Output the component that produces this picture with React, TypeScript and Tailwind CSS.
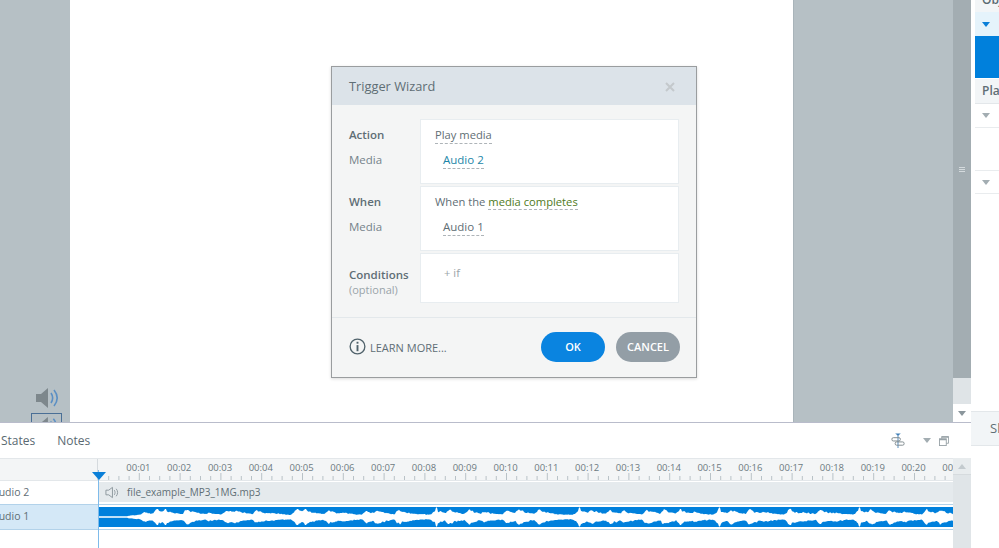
import React from "react";

const FONT = { fontFamily: '"Open Sans", "Noto Sans", sans-serif' };

const PEAKS: [number, number][] = [
  [146, 3], [158, 8], [166, 8], [188, 7], [210, 2.5], [228, 5.5], [236, 5.5], [258, 5], [272, 2.5], [298, 8], [306, 8],
  [330, 5.5], [345, 3], [368, 4.5], [378, 5.5], [400, 6], [437, 9.5], [450, 6], [470, 7.5], [485, 4], [508, 5], [520, 6.5],
  [540, 7.5], [580, 9.5], [592, 6], [611, 5.5], [625, 4.5], [648, 6], [665, 6], [681, 8], [695, 4], [720, 9.5], [732, 6],
  [751, 6], [765, 4], [791, 8], [805, 3.5], [821, 7], [835, 3.5], [860, 9.5], [872, 6], [891, 6], [905, 4], [928, 6], [941, 6],
];

function wavePath() {
  let seed = 12345;
  const rnd = () => {
    seed = (seed * 1664525 + 1013904223) % 4294967296;
    return seed / 4294967296;
  };
  const W = 860;
  const up: string[] = [];
  const down: string[] = [];
  let j1 = 0.8;
  let j2 = 0.8;
  for (let x = 0; x < W; x += 1) {
    const px = x + 99;
    let top = 0.7;
    let bottom = 0.7;
    if (x % 2 === 0) {
      j1 = 0.6 + rnd() * 0.4;
      j2 = 0.6 + rnd() * 0.4;
    }
    if (px > 128) {
      let a = 0;
      let spike = 0;
      for (const [p, h] of PEAKS) {
        const d = px - p;
        const g = d < 0 ? Math.exp(-(d * d) / 14) : Math.exp(-d / 11);
        a = Math.max(a, Math.min(h, 6.2) * g);
        if (d === 0 || d === 1) spike = Math.max(spike, h);
      }
      const ramp = Math.min(1, (px - 128) / 12);
      top = Math.max(0.7 + ramp * 0.9 + a * j1 + rnd() * 0.8, spike);
      bottom = Math.max(0.7 + ramp * 0.9 + a * j2 + rnd() * 0.8, spike);
    }
    up.push(`${x},${(10 - top).toFixed(1)}`);
    down.push(`${x},${(10 + bottom).toFixed(1)}`);
  }
  return `M${up.join("L")}L${down.reverse().join("L")}Z`;
}
const WAVE = wavePath();

const SECONDS = Array.from({ length: 21 }, (_, i) => `00:${String(i + 1).padStart(2, "0")}`);
const TICKS = Array.from({ length: 86 }, (_, i) => i);

function Speaker({ className }: { className?: string }) {
  return (
    <svg viewBox="0 0 24 22" className={className}>
      <path d="M1 7h5l7-6v20l-7-6H1z" fill="#7d878c" />
      <path d="M16 6c2 3 2 7 0 10" fill="none" stroke="#5b8fc4" strokeWidth="1.6" />
      <path d="M19 3c4 5 4 11 0 16" fill="none" stroke="#5b8fc4" strokeWidth="1.6" />
    </svg>
  );
}

function Caret({ color }: { color: string }) {
  return (
    <svg viewBox="0 0 8 5" className="w-[8px] h-[5px]">
      <path d="M0 0h8L4 5z" fill={color} />
    </svg>
  );
}

export default function App() {
  return (
    <div className="relative w-[999px] h-[548px] overflow-hidden bg-white flex text-[#5f6e75]" style={FONT}>
      <div className="w-[971px] h-full flex flex-col">
        {/* stage */}
        <div className="h-[422px] flex bg-[#b6c0c5] overflow-hidden">
          <div className="relative w-[70px] overflow-hidden">
            <Speaker className="absolute left-[35px] top-[387px] w-[24px] h-[22px]" />
            <div className="absolute left-[31px] top-[413px] w-[31px] h-[20px] border border-[#4a6f96] overflow-hidden">
              <Speaker className="ml-[4px] mt-[2px] w-[22px] h-[20px]" />
            </div>
          </div>
          <div className="w-[723px] bg-white" />
          <div className="w-[160px] border-l border-[#a9b4ba]" />
          <div className="w-[18px] flex flex-col bg-[#a3adb2]">
            <div className="h-[378px] flex items-center justify-center">
              <div className="flex flex-col gap-[1px] mt-[-40px]">
                <div className="w-[6px] h-[1px] bg-[#d4dadd]" />
                <div className="w-[6px] h-[1px] bg-[#d4dadd]" />
                <div className="w-[6px] h-[1px] bg-[#d4dadd]" />
              </div>
            </div>
            <div className="h-[26px] bg-[#dfe4e7]" />
            <div className="h-[18px] bg-white flex items-center justify-center">
              <Caret color="#8b969c" />
            </div>
          </div>
        </div>

        {/* timeline panel */}
        <div className="flex-1 flex flex-col border-t border-[#b9bccb] bg-white overflow-hidden">
          <div className="h-[35px] flex items-center">
            <div className="flex items-center gap-[22px] pl-[1px] text-[12px] text-[#5a6a72]">
              <span>States</span>
              <span>Notes</span>
            </div>
            <div className="ml-auto flex items-center pr-[22px]">
              <svg viewBox="0 0 14 16" className="w-[14px] h-[15px]">
                <path d="M4 0.5h6L7 3z" fill="#3f7fb8" />
                <path d="M7 2v14" stroke="#4d86bb" strokeWidth="1" />
                <rect x="0.5" y="5" width="9" height="3.5" rx="1.5" fill="none" stroke="#7d878c" />
                <rect x="4" y="9.5" width="9.5" height="3.5" rx="1.5" fill="none" stroke="#7d878c" />
              </svg>
              <div className="ml-[18px] mr-[8px]">
                <Caret color="#a3adb2" />
              </div>
              <svg viewBox="0 0 11 11" className="w-[10px] h-[10px]">
                <rect x="0.5" y="3" width="7.5" height="7.5" fill="none" stroke="#98a2a7" />
                <path d="M3 3V0.5h7.5V8H8" fill="none" stroke="#98a2a7" />
                <path d="M3 1.2h7.5M0.5 4h7.5" stroke="#98a2a7" strokeWidth="1.4" />
              </svg>
            </div>
          </div>

          <div className="flex-1 flex">
            <div className="relative flex-1 flex flex-col overflow-hidden">
              {/* ruler */}
              <div className="h-[22px] flex bg-[#f3f5f6] border-t border-[#e3e7ea]">
                <div className="w-[98px] shrink-0 border-r border-[#d5dade]" />
                <div className="relative flex-1 overflow-hidden">
                  <div className="flex pl-[20px] text-[9.5px] leading-[14px] pt-[2px] text-[#6d7a81]">
                    {SECONDS.map((s) => (
                      <span key={s} className="w-[40.8px] shrink-0 text-center">
                        {s}
                      </span>
                    ))}
                  </div>
                  <svg className="absolute left-0 bottom-0 w-[860px] h-[7px]" viewBox="0 0 860 7">
                    {TICKS.map((i) => (
                      <line
                        key={i}
                        x1={10.2 * i + 0.5}
                        x2={10.2 * i + 0.5}
                        y1={i % 4 === 0 ? 0 : 3}
                        y2={7}
                        stroke="#b9c2c7"
                      />
                    ))}
                  </svg>
                </div>
              </div>
              {/* Audio 2 */}
              <div className="h-[24px] flex bg-white border-t border-[#e3e7ea]">
                <div className="w-[98px] shrink-0 flex items-center overflow-hidden text-[10.5px]">
                  <span className="ml-[-8px]">Audio 2</span>
                </div>
                <div className="flex-1 flex items-center gap-[8px] h-[20px] mt-[1px] pl-[7px] bg-[#e5eaed] text-[10px]">
                  <svg viewBox="0 0 15 13" className="w-[14px] h-[13px]">
                    <path d="M1 4h3l4-3v11L4 9H1z" fill="none" stroke="#8b969c" />
                    <path d="M10 4c1 1.5 1 3.5 0 5M12 2.5c2 2.5 2 5.5 0 8" fill="none" stroke="#8b969c" />
                  </svg>
                  <span className="pt-[1px]">file_example_MP3_1MG.mp3</span>
                </div>
              </div>
              {/* Audio 1 */}
              <div className="h-[26px] flex bg-white border-y border-[#b2d2ea]">
                <div className="w-[98px] shrink-0 flex items-center overflow-hidden text-[10.5px] bg-[#d4e8f7]">
                  <span className="ml-[-8px]">Audio 1</span>
                </div>
                <div className="flex-1 h-[20px] mt-[2px] bg-[#0080dc] overflow-hidden">
                  <svg viewBox="0 0 860 20" className="w-[860px] h-[20px] max-w-none">
                    <path d={WAVE} fill="#ffffff" />
                  </svg>
                </div>
              </div>
              {/* playhead */}
              <div className="absolute left-[98px] top-[12px] bottom-0 w-[1px] bg-[#7fbbea]" />
              <svg viewBox="0 0 14 8" className="absolute left-[91.5px] top-[14px] w-[14px] h-[8px]">
                <path d="M0 0h14L7 8z" fill="#0a7fd8" />
              </svg>
            </div>
            <div className="w-[18px] bg-[#e0e5e8] flex flex-col">
              <div className="h-[17px] bg-[#e8ecee] flex items-center justify-center border-b border-[#d6dbde]">
                <div className="rotate-180 flex">
                  <Caret color="#c3cace" />
                </div>
              </div>
            </div>
          </div>
        </div>
      </div>

      {/* right panel */}
      <div className="flex-1 flex flex-col bg-white pl-[4px] overflow-hidden">
        <div className="h-[12px] bg-[#f2f5f7] overflow-hidden text-[12px] font-semibold leading-[10px] pl-[7px] text-[#5a6a72]">
          <span className="block mt-[-5px]">Objects</span>
        </div>
        <div className="h-[24px] bg-[#e5f3fb] flex items-center pl-[7px] pt-[1px]">
          <Caret color="#0a7fd8" />
        </div>
        <div className="h-[42px] bg-[#0080dc]" />
        <div className="h-[25px] mt-[1px] bg-[#f2f5f7] border-b border-[#e3e7ea] flex items-center pl-[7px] text-[12px] font-semibold overflow-hidden">
          Play
        </div>
        <div className="h-[24px] border-b border-[#e9ecee] flex items-center pl-[7px]">
          <Caret color="#a3adb2" />
        </div>
        <div className="h-[42px]" />
        <div className="h-[24px] border-y border-[#e9ecee] flex items-center pl-[7px]">
          <Caret color="#a3adb2" />
        </div>
        <div className="h-[217px]" />
        <div className="h-[35px] ml-[-4px] bg-[#f2f5f7] border-y border-[#e3e7ea] flex items-center pl-[19px] text-[13px] overflow-hidden">
          Slide
        </div>
      </div>

      {/* dialog */}
      <div className="absolute left-[331px] top-[66px] w-[366px] h-[312px] border border-[#9a9d9f] bg-[#f4f5f5] flex flex-col shadow-[0_1px_3px_rgba(0,0,0,0.15)]">
        <div className="h-[38px] bg-[#dce3e9] flex items-center justify-between pl-[17px] pr-[21px] pt-[1px] text-[12.8px]">
          <span>Trigger Wizard</span>
          <svg viewBox="0 0 10 10" className="w-[10px] h-[10px]">
            <path d="M1 1l8 8M9 1l-8 8" stroke="#c4c9cc" strokeWidth="2" />
          </svg>
        </div>
        <div className="flex flex-col gap-[2px] pt-[14px] pl-[17px] pr-[17px] text-[11.2px]">
          <div className="flex">
            <div className="w-[71px] pt-[7px] flex flex-col gap-[7px] leading-[18px] text-[11.5px]">
              <span className="font-semibold">Action</span>
              <span className="text-[#75838a]">Media</span>
            </div>
            <div className="flex-1 h-[65px] bg-white border border-[#e8edf0] pl-[14px] pt-[6px] flex flex-col items-start gap-[7px] leading-[17px]">
              <span className="border-b border-dashed border-[#aeb4b8]">Play media</span>
              <span className="ml-[8px] text-[11.5px] text-[#1d86a8] border-b border-dashed border-[#aeb4b8]">Audio 2</span>
            </div>
          </div>
          <div className="flex">
            <div className="w-[71px] pt-[7px] flex flex-col gap-[7px] leading-[18px] text-[11.5px]">
              <span className="font-semibold">When</span>
              <span className="text-[#75838a]">Media</span>
            </div>
            <div className="flex-1 h-[65px] bg-white border border-[#e8edf0] pl-[14px] pt-[6px] flex flex-col items-start gap-[8px] leading-[17px]">
              <span>
                When the{" "}
                <span className="text-[#4f7a22] border-b border-dashed border-[#aeb4b8]">media completes</span>
              </span>
              <span className="ml-[8px] text-[11.5px] border-b border-dashed border-[#aeb4b8]">Audio 1</span>
            </div>
          </div>
          <div className="flex">
            <div className="w-[71px] pt-[14px] flex flex-col leading-[16px] text-[11.5px]">
              <span className="font-semibold">Conditions</span>
              <span className="text-[#9aa4a9] text-[11px] mt-[-1px]">(optional)</span>
            </div>
            <div className="flex-1 h-[50px] bg-white border border-[#e8edf0] pl-[23px] pt-[10px] leading-[17px] text-[#9aa4a9]">
              + if
            </div>
          </div>
        </div>
        <div className="mt-[14px] border-t border-[#e3e8eb] flex-1 flex items-center pl-[17px] pr-[16px] pb-[2px]">
          <svg viewBox="0 0 18 18" className="w-[17px] h-[17px] mr-[4px]">
            <circle cx="9" cy="9" r="7.8" fill="none" stroke="#50626b" strokeWidth="1.4" />
            <rect x="8" y="7.5" width="2" height="6.5" fill="#50626b" />
            <rect x="8" y="4" width="2" height="2" fill="#50626b" />
          </svg>
          <span className="text-[11px] pt-[3px]">LEARN MORE...</span>
          <div className="ml-auto flex gap-[11px] text-[11px] font-semibold">
            <div className="w-[64px] h-[30px] pt-[1px] rounded-full bg-[#0a84e0] text-white flex items-center justify-center">OK</div>
            <div className="w-[64px] h-[30px] pt-[1px] rounded-full bg-[#939ea6] text-white flex items-center justify-center">CANCEL</div>
          </div>
        </div>
      </div>
    </div>
  );
}
